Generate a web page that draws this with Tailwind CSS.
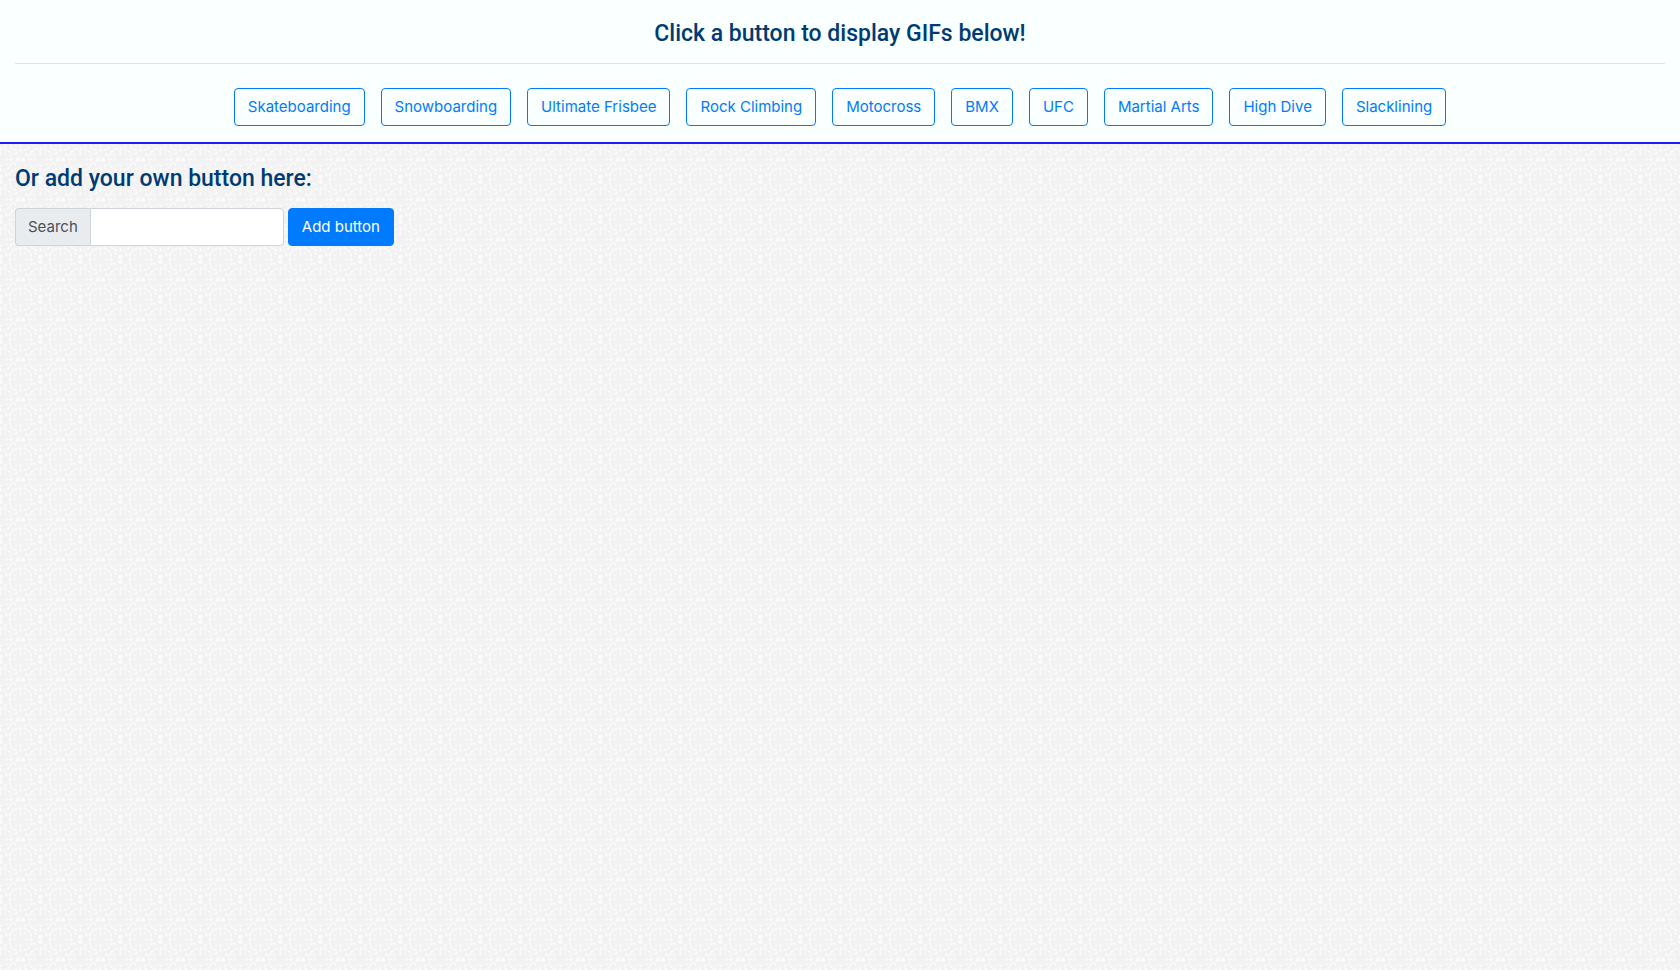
<!DOCTYPE html>
<html lang="en">
<head>
<meta charset="utf-8">
<meta name="viewport" content="width=device-width, initial-scale=1">
<title>GIF buttons</title>
<script src="https://cdn.jsdelivr.net/npm/@tailwindcss/browser@4"></script>
</head>
<body class="relative isolate min-h-screen bg-[#f2f2f2] font-['Inter','Liberation_Sans',sans-serif] text-[15px] leading-6">
<!-- Repeating floral wallpaper -->
<svg class="absolute inset-0 -z-10 h-full w-full" aria-hidden="true">
  <defs>
    <g id="quarter" fill="#fafafa">
      <path d="M-.5-7.500h1v1h1v1h-1v1h-1v-1h-1v-1h1z"/>
      <ellipse cx="0" cy="-10.500" rx="1.300" ry="2"/>
      <ellipse cx="4.500" cy="-6" rx="1.300" ry=".8" transform="rotate(-40 4.500 -6)"/>
      <ellipse cx="5" cy="-10.500" rx="1.900" ry="1.200" transform="rotate(35 5 -10.500)"/>
      <ellipse cx="8.500" cy="-8" rx="1.900" ry="1.200" transform="rotate(50 8.500 -8)"/>
      <ellipse cx="4.500" cy="-14" rx="1.800" ry="1.100" transform="rotate(-35 4.500 -14)"/>
      <ellipse cx="10.500" cy="-4.500" rx="1.800" ry="1" transform="rotate(70 10.500 -4.500)"/>
    </g>
    <g id="ring">
      <use href="#quarter"/>
      <use href="#quarter" transform="rotate(90)"/>
      <use href="#quarter" transform="rotate(180)"/>
      <use href="#quarter" transform="rotate(270)"/>
    </g>
    <pattern id="floral" width="40" height="40" patternUnits="userSpaceOnUse">
      <use href="#ring" x="20.500" y="19.500"/>
      <use href="#ring" x=".5" y="-.5"/>
      <use href="#ring" x="40.500" y="-.5"/>
      <use href="#ring" x=".5" y="39.500"/>
      <use href="#ring" x="40.500" y="39.500"/>
      <g fill="#fbfbfb">
        <rect x="-1.500" y="15" width="4" height="4" rx="1"/>
        <rect x="-1.500" y="20" width="4" height="4" rx="1"/>
        <rect x="38.500" y="15" width="4" height="4" rx="1"/>
        <rect x="38.500" y="20" width="4" height="4" rx="1"/>
        <rect x="16" y="-2.500" width="4" height="4" rx="1"/>
        <rect x="21" y="-2.500" width="4" height="4" rx="1"/>
        <rect x="16" y="37.500" width="4" height="4" rx="1"/>
        <rect x="21" y="37.500" width="4" height="4" rx="1"/>
      </g>
    </pattern>
  </defs>
  <rect width="100%" height="100%" fill="url(#floral)"/>
</svg>

<header class="border-b-2 border-[#1a1aff] bg-[#faffff] px-[15px] pt-5 pb-4 text-center">
  <h1 class="font-['Roboto','Liberation_Sans',sans-serif] text-[23px] leading-7 font-medium text-[#003b73]">Click a button to display GIFs below!</h1>
  <hr class="mt-[15px] mb-6 border-[#dfe4e4]">
  <div class="flex flex-wrap justify-center gap-4 text-[#007bff]">
    <button class="h-[38px] rounded border border-[#007bff] px-[13px]">Skateboarding</button>
    <button class="h-[38px] rounded border border-[#007bff] px-[13px]">Snowboarding</button>
    <button class="h-[38px] rounded border border-[#007bff] px-[13px]">Ultimate Frisbee</button>
    <button class="h-[38px] rounded border border-[#007bff] px-[13px]">Rock Climbing</button>
    <button class="h-[38px] rounded border border-[#007bff] px-[13px]">Motocross</button>
    <button class="h-[38px] rounded border border-[#007bff] px-[13px]">BMX</button>
    <button class="h-[38px] rounded border border-[#007bff] px-[13px]">UFC</button>
    <button class="h-[38px] rounded border border-[#007bff] px-[13px]">Martial Arts</button>
    <button class="h-[38px] rounded border border-[#007bff] px-[13px]">High Dive</button>
    <button class="h-[38px] rounded border border-[#007bff] px-[13px]">Slacklining</button>
  </div>
</header>

<main class="px-[15px] pt-[21px]">
  <h2 class="font-['Roboto','Liberation_Sans',sans-serif] text-[23px] leading-7 font-medium text-[#003b73]">Or add your own button here:</h2>
  <form class="mt-[15px] flex gap-1">
    <div class="flex h-[38px]">
      <label for="search" class="flex items-center rounded-l border border-r-0 border-[#ced4da] bg-[#e9ecef] px-3 text-[#495057]">Search</label>
      <input id="search" type="text" class="w-[194px] rounded-r border border-[#ced4da] bg-white px-3 text-[#495057]">
    </div>
    <button type="button" class="h-[38px] rounded border border-[#007bff] bg-[#007bff] px-[13px] text-white">Add button</button>
  </form>
</main>
</body>
</html>
